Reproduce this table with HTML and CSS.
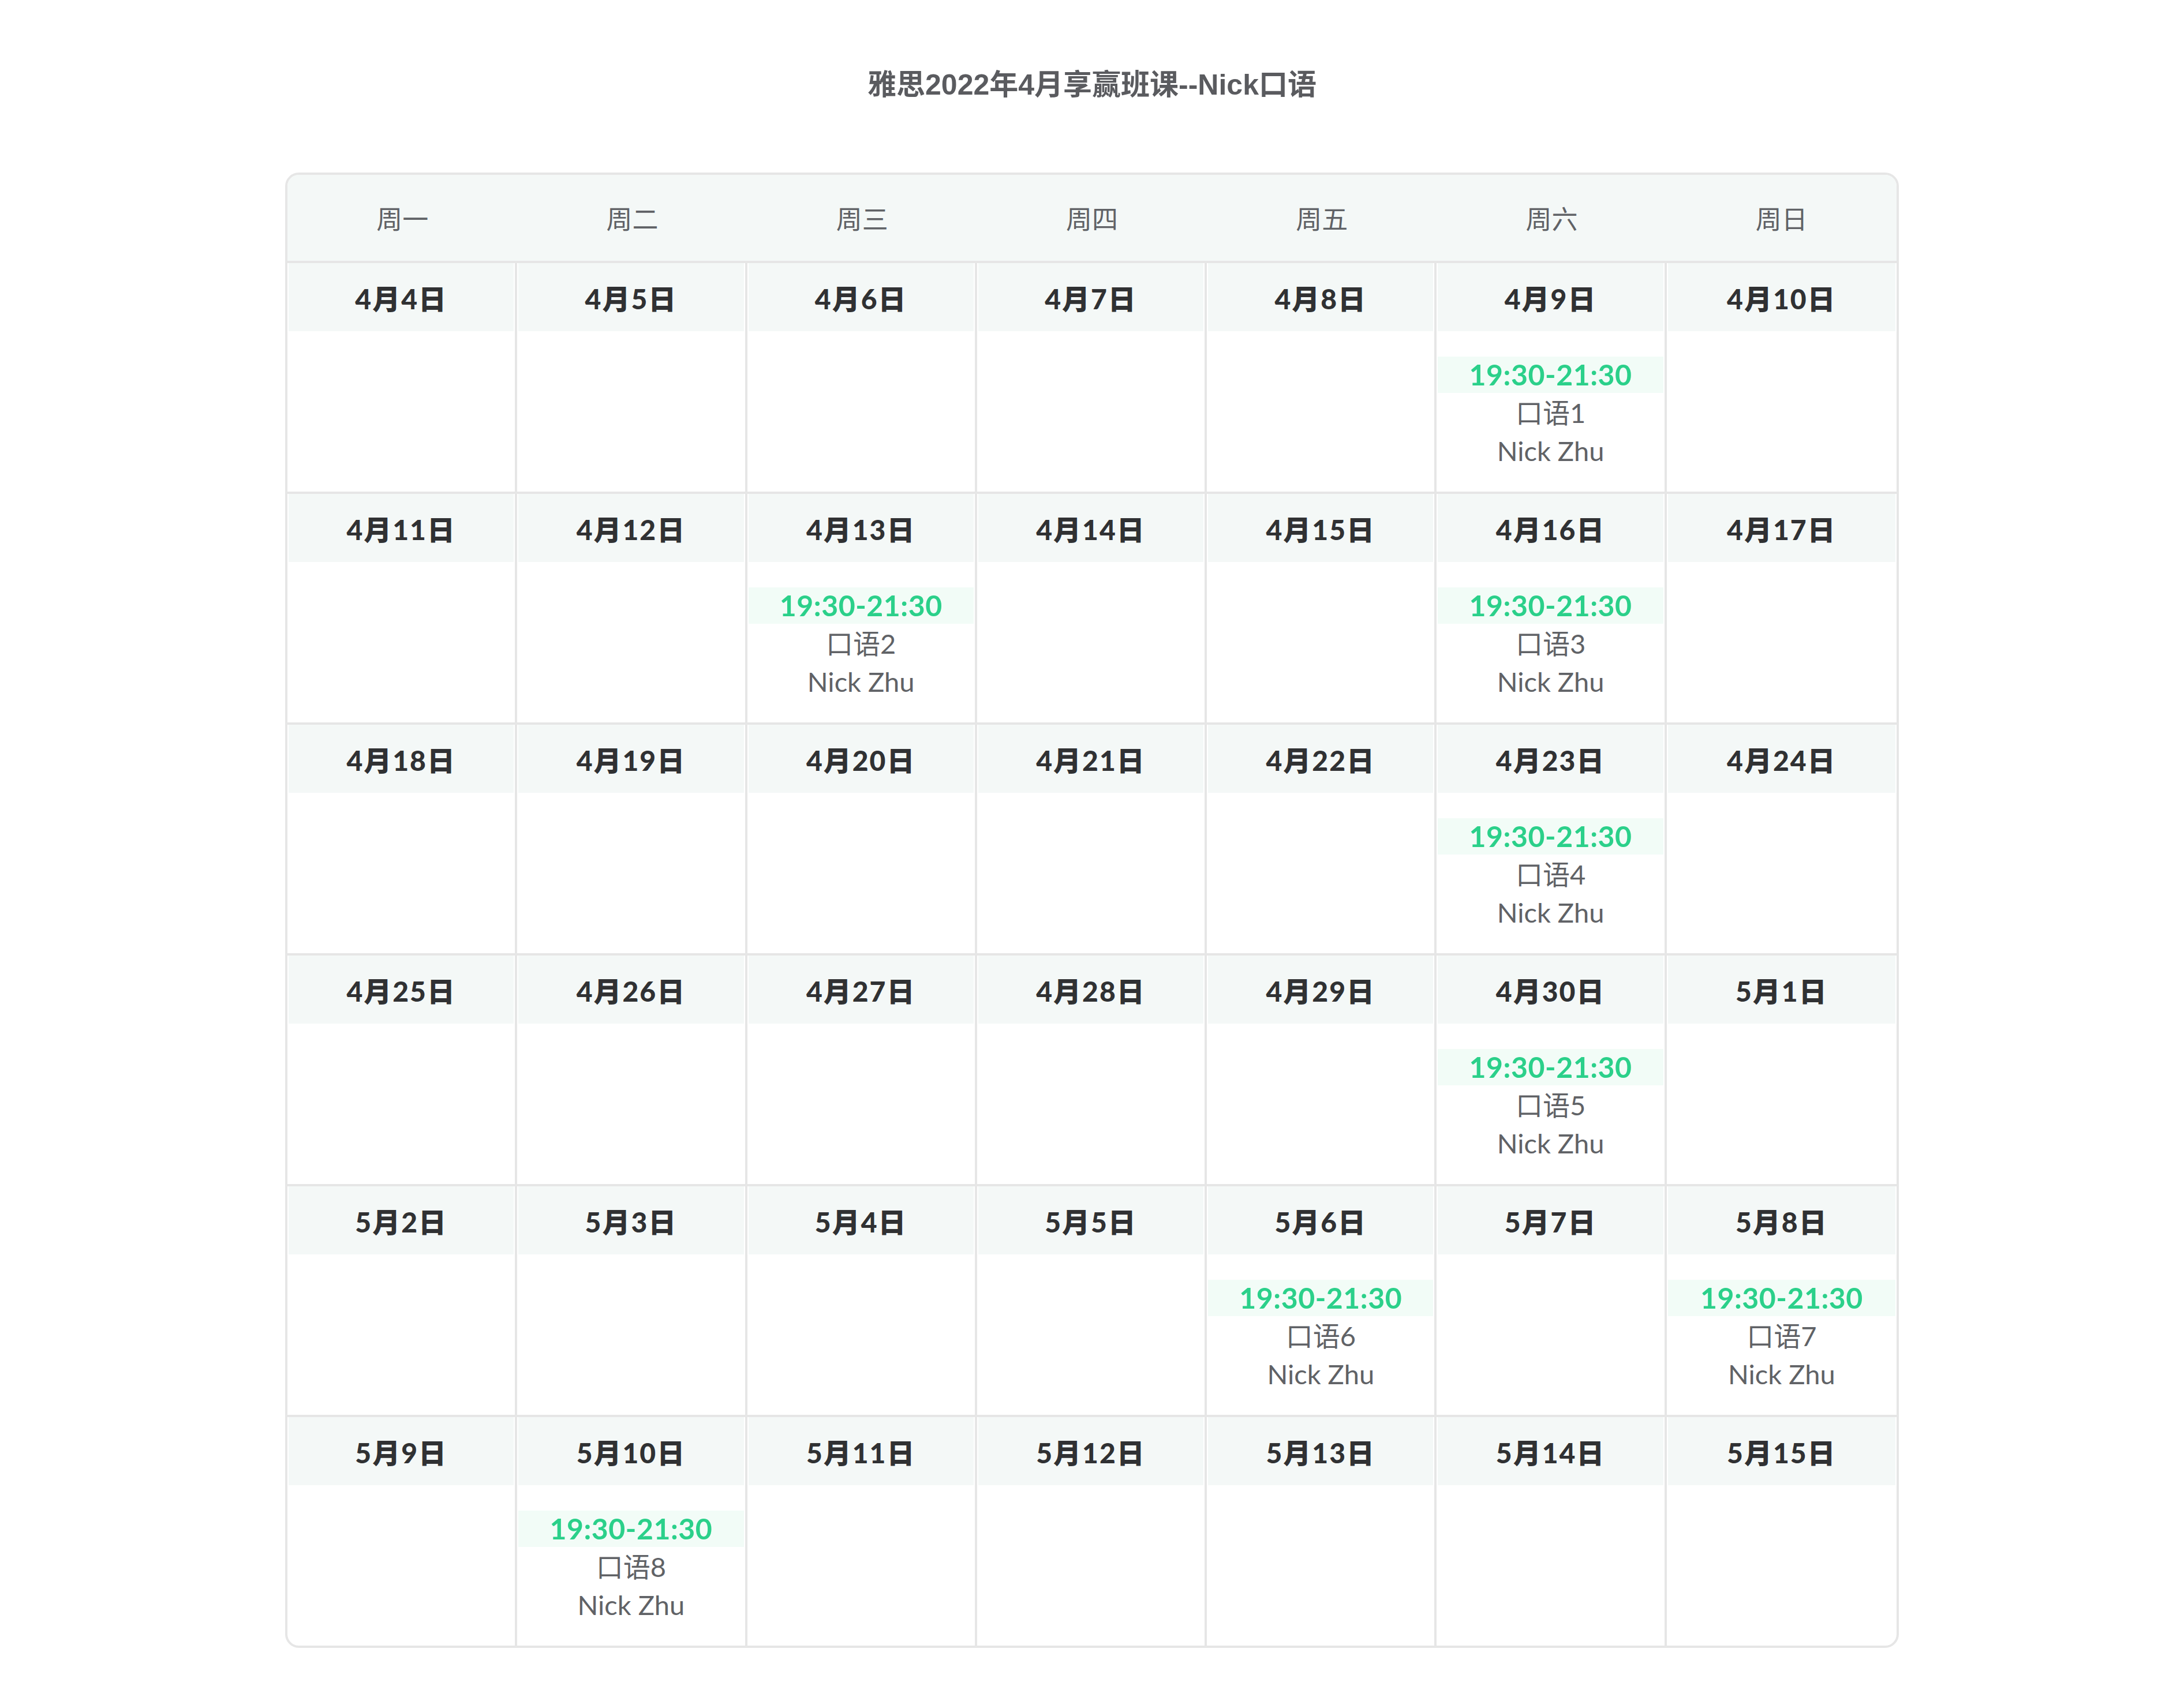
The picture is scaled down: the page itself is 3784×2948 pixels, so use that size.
FILE: index.html
```html
<!doctype html>
<html lang="zh-CN">
  <head>
    <meta charset="UTF-8" />
    <meta name="viewport" content="width=device-width, initial-scale=1.0" />
    <title>雅思2022年4月享赢班课--Nick口语</title>
    <link rel="stylesheet" href="styles.css">
  </head>
  <body>
    <h1 class="title">雅思2022年4月享赢班课--Nick口语</h1>
    <div class="calendar">
      <div class="weekdays">
        <div>周一</div><div>周二</div><div>周三</div><div>周四</div><div>周五</div><div>周六</div><div>周日</div>
      </div>

      <div class="week">
        <div class="day"><div class="date">4月4日</div><div class="slot"></div></div>
        <div class="day"><div class="date">4月5日</div><div class="slot"></div></div>
        <div class="day"><div class="date">4月6日</div><div class="slot"></div></div>
        <div class="day"><div class="date">4月7日</div><div class="slot"></div></div>
        <div class="day"><div class="date">4月8日</div><div class="slot"></div></div>
        <div class="day"><div class="date">4月9日</div><div class="slot">
          <div class="time">19:30-21:30</div><div class="lesson">口语1</div><div class="lesson">Nick Zhu</div>
        </div></div>
        <div class="day"><div class="date">4月10日</div><div class="slot"></div></div>
      </div>

      <div class="week">
        <div class="day"><div class="date">4月11日</div><div class="slot"></div></div>
        <div class="day"><div class="date">4月12日</div><div class="slot"></div></div>
        <div class="day"><div class="date">4月13日</div><div class="slot">
          <div class="time">19:30-21:30</div><div class="lesson">口语2</div><div class="lesson">Nick Zhu</div>
        </div></div>
        <div class="day"><div class="date">4月14日</div><div class="slot"></div></div>
        <div class="day"><div class="date">4月15日</div><div class="slot"></div></div>
        <div class="day"><div class="date">4月16日</div><div class="slot">
          <div class="time">19:30-21:30</div><div class="lesson">口语3</div><div class="lesson">Nick Zhu</div>
        </div></div>
        <div class="day"><div class="date">4月17日</div><div class="slot"></div></div>
      </div>

      <div class="week">
        <div class="day"><div class="date">4月18日</div><div class="slot"></div></div>
        <div class="day"><div class="date">4月19日</div><div class="slot"></div></div>
        <div class="day"><div class="date">4月20日</div><div class="slot"></div></div>
        <div class="day"><div class="date">4月21日</div><div class="slot"></div></div>
        <div class="day"><div class="date">4月22日</div><div class="slot"></div></div>
        <div class="day"><div class="date">4月23日</div><div class="slot">
          <div class="time">19:30-21:30</div><div class="lesson">口语4</div><div class="lesson">Nick Zhu</div>
        </div></div>
        <div class="day"><div class="date">4月24日</div><div class="slot"></div></div>
      </div>

      <div class="week">
        <div class="day"><div class="date">4月25日</div><div class="slot"></div></div>
        <div class="day"><div class="date">4月26日</div><div class="slot"></div></div>
        <div class="day"><div class="date">4月27日</div><div class="slot"></div></div>
        <div class="day"><div class="date">4月28日</div><div class="slot"></div></div>
        <div class="day"><div class="date">4月29日</div><div class="slot"></div></div>
        <div class="day"><div class="date">4月30日</div><div class="slot">
          <div class="time">19:30-21:30</div><div class="lesson">口语5</div><div class="lesson">Nick Zhu</div>
        </div></div>
        <div class="day"><div class="date">5月1日</div><div class="slot"></div></div>
      </div>

      <div class="week">
        <div class="day"><div class="date">5月2日</div><div class="slot"></div></div>
        <div class="day"><div class="date">5月3日</div><div class="slot"></div></div>
        <div class="day"><div class="date">5月4日</div><div class="slot"></div></div>
        <div class="day"><div class="date">5月5日</div><div class="slot"></div></div>
        <div class="day"><div class="date">5月6日</div><div class="slot">
          <div class="time">19:30-21:30</div><div class="lesson">口语6</div><div class="lesson">Nick Zhu</div>
        </div></div>
        <div class="day"><div class="date">5月7日</div><div class="slot"></div></div>
        <div class="day"><div class="date">5月8日</div><div class="slot">
          <div class="time">19:30-21:30</div><div class="lesson">口语7</div><div class="lesson">Nick Zhu</div>
        </div></div>
      </div>

      <div class="week">
        <div class="day"><div class="date">5月9日</div><div class="slot"></div></div>
        <div class="day"><div class="date">5月10日</div><div class="slot">
          <div class="time">19:30-21:30</div><div class="lesson">口语8</div><div class="lesson">Nick Zhu</div>
        </div></div>
        <div class="day"><div class="date">5月11日</div><div class="slot"></div></div>
        <div class="day"><div class="date">5月12日</div><div class="slot"></div></div>
        <div class="day"><div class="date">5月13日</div><div class="slot"></div></div>
        <div class="day"><div class="date">5月14日</div><div class="slot"></div></div>
        <div class="day"><div class="date">5月15日</div><div class="slot"></div></div>
      </div>
    </div>
  </body>
</html>
```

FILE: styles.css
```css
* {
  margin: 0;
  padding: 0;
  box-sizing: border-box;
}
body {
  background-color: #ffffff;
  font-family: "Lato", "Noto Sans CJK SC", sans-serif;
  color: #606266;
  padding-top: 112px;
}
.title {
  font-family: "Liberation Sans", "Noto Sans CJK SC", sans-serif;
  font-size: 50px;
  line-height: 70px;
  font-weight: bold;
  color: #5a5b5f;
  text-align: center;
  margin-bottom: 117px;
}
.calendar {
  width: 2796px;
  margin: 0 auto;
  border: 4px solid #e6e6e6;
  border-radius: 24px;
  overflow: hidden;
}
.weekdays {
  display: grid;
  grid-template-columns: repeat(7, 1fr);
  height: 153px;
  background-color: #f4f8f7;
  border-bottom: 4px solid #e6e6e6;
}
.weekdays div {
  display: flex;
  align-items: center;
  justify-content: center;
  font-size: 45px;
  color: #606266;
}
.week {
  display: grid;
  grid-template-columns: repeat(7, 1fr);
  border-bottom: 4px solid #e6e6e6;
}
.week:last-child {
  border-bottom: none;
}
.day {
  display: flex;
  flex-direction: column;
  padding: 0 2px;
  border-right: 4px solid #e6e6e6;
}
.day:last-child {
  border-right: none;
}
.date {
  height: 118px;
  display: flex;
  align-items: center;
  justify-content: center;
  background-color: #f4f8f7;
  font-size: 48px;
  font-weight: 900;
  letter-spacing: 2px;
  color: #303133;
}
.slot {
  height: 278px;
  display: flex;
  flex-direction: column;
  justify-content: center;
  text-align: center;
  padding-top: 4px;
}
.time {
  height: 63px;
  line-height: 63px;
  background-color: #f2fcf7;
  color: #2bd08a;
  font-size: 50px;
  font-weight: bold;
  letter-spacing: 0.5px;
}
.lesson {
  height: 66px;
  line-height: 68px;
  font-size: 47px;
  color: #606266;
}
```
